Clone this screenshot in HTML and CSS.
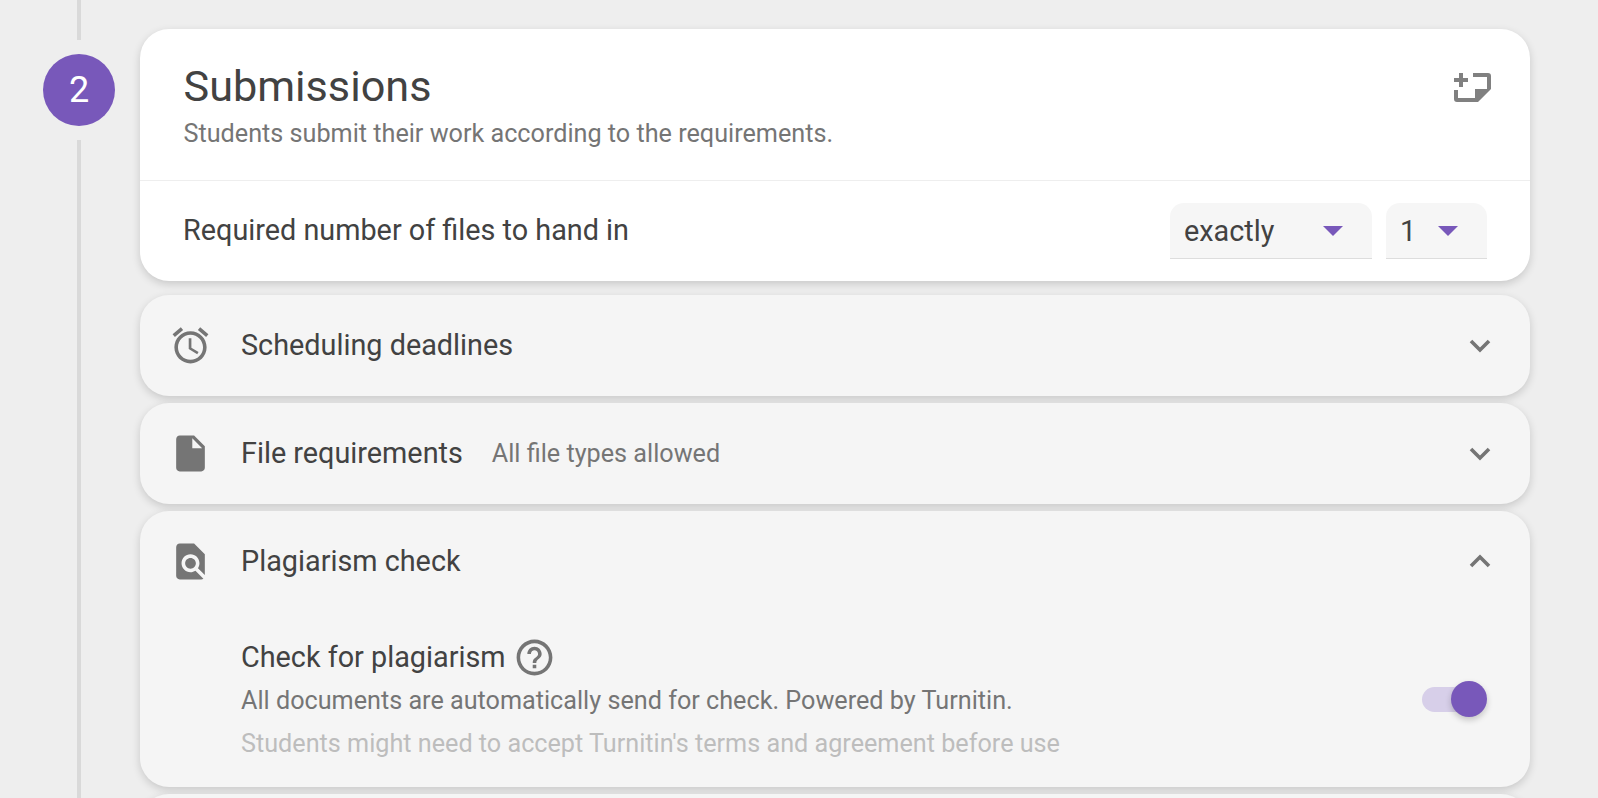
FILE: index.html
```html
<!DOCTYPE html>
<html lang="en">
<head>
<meta charset="utf-8">
<title>Submissions</title>
<link rel="stylesheet" href="styles.css">
</head>
<body>
<div class="page">
  <div class="rail">
    <div class="rail-line rail-top"></div>
    <div class="step">2</div>
    <div class="rail-line rail-bottom"></div>
  </div>
  <div class="cards">
    <section class="card card-main">
      <header class="main-head">
        <div>
          <h1 class="title">Submissions</h1>
          <p class="subtitle">Students submit their work according to the requirements.</p>
        </div>
        <svg class="note-icon" viewBox="0 0 38 30" aria-hidden="true">
          <path class="note-fill" d="M5 1h4v5h5v4H9v5H5v-5H0V6h5zM19 1h15a3 3 0 0 1 3 3v13l-13 13H3a3 3 0 0 1-3-3V18h4v8h17V17h12V5H19z"/>
        </svg>
      </header>
      <div class="main-row">
        <span class="label">Required number of files to hand in</span>
        <div class="selects">
          <div class="select select-wide"><span>exactly</span><i class="caret"></i></div>
          <div class="select select-narrow"><span>1</span><i class="caret"></i></div>
        </div>
      </div>
    </section>

    <section class="card row-card card-first">
      <div class="row-head">
        <svg class="icon" viewBox="0 0 24 24" aria-hidden="true"><path d="M22 5.72l-4.6-3.86-1.29 1.53 4.6 3.86L22 5.72zM7.88 3.39L6.6 1.86 2 5.71l1.29 1.53 4.59-3.85zM12.5 8H11v6l4.75 2.85.75-1.23-4-2.37V8zM12 4c-4.97 0-9 4.03-9 9s4.02 9 9 9c4.97 0 9-4.03 9-9s-4.03-9-9-9zm0 16c-3.87 0-7-3.13-7-7s3.13-7 7-7 7 3.13 7 7-3.13 7-7 7z"/></svg>
        <span class="label">Scheduling deadlines</span>
        <svg class="chevron" viewBox="0 0 22 14" aria-hidden="true"><path d="M2 2l9 9 9-9"/></svg>
      </div>
    </section>

    <section class="card row-card">
      <div class="row-head">
        <svg class="icon" viewBox="0 0 24 24" aria-hidden="true"><path d="M6 2c-1.1 0-1.99.9-1.99 2L4 20c0 1.1.89 2 1.99 2H18c1.1 0 2-.9 2-2V8l-6-6H6zm7 7V3.5L18.5 9H13z"/></svg>
        <span class="label">File requirements</span>
        <span class="hint">All file types allowed</span>
        <svg class="chevron" viewBox="0 0 22 14" aria-hidden="true"><path d="M2 2l9 9 9-9"/></svg>
      </div>
    </section>

    <section class="card row-card">
      <div class="row-head">
        <svg class="icon" viewBox="0 0 24 24" aria-hidden="true"><path d="M20 19.59V8l-6-6H6c-1.1 0-1.99.9-1.99 2L4 20c0 1.1.89 2 1.99 2H18c.45 0 .85-.15 1.19-.4l-4.43-4.43c-.8.52-1.74.83-2.76.83-2.76 0-5-2.24-5-5s2.24-5 5-5 5 2.24 5 5c0 1.02-.31 1.96-.83 2.75L20 19.59zM9 13c0 1.66 1.34 3 3 3s3-1.34 3-3-1.34-3-3-3-3 1.34-3 3z"/></svg>
        <span class="label">Plagiarism check</span>
        <svg class="chevron chevron-up" viewBox="0 0 22 14" aria-hidden="true"><path d="M2 12l9-9 9 9"/></svg>
      </div>
      <div class="row-body">
        <div class="body-text">
          <div class="check-title">
            <span class="label">Check for plagiarism</span>
            <svg class="icon help" viewBox="0 0 24 24" aria-hidden="true"><path d="M11 18h2v-2h-2v2zm1-16C6.48 2 2 6.48 2 12s4.48 10 10 10 10-4.48 10-10S17.52 2 12 2zm0 18c-4.41 0-8-3.59-8-8s3.59-8 8-8 8 3.59 8 8-3.59 8-8 8zm0-14c-2.21 0-4 1.79-4 4h2c0-1.1.9-2 2-2s2 .9 2 2c0 2-3 1.75-3 5h2c0-2.25 3-2.5 3-5 0-2.21-1.79-4-4-4z"/></svg>
          </div>
          <p class="desc">All documents are automatically send for check. Powered by Turnitin.</p>
          <p class="note">Students might need to accept Turnitin's terms and agreement before use</p>
        </div>
        <div class="toggle"><span class="toggle-track"></span><span class="toggle-knob"></span></div>
      </div>
    </section>

    <section class="card row-card card-next"></section>
  </div>
</div>
</body>
</html>
```
FILE: styles.css
```css
* { box-sizing: border-box; }
html, body { margin: 0; height: 100%; overflow: hidden; }
body {
  background: #eeeeee;
  color: #424242;
  font-family: Roboto, "Liberation Sans", sans-serif;
}
.page { display: flex; height: 798px; overflow: hidden; }

.rail {
  display: flex;
  flex-direction: column;
  align-items: center;
  width: 72px;
  margin-left: 43px;
  margin-right: 25px;
  flex: none;
}
.rail-line { width: 4px; background: #d9d9d9; }
.rail-top { height: 40px; }
.rail-bottom { flex: 1; }
.step {
  width: 72px;
  height: 72px;
  margin: 14px 0;
  flex: none;
  border-radius: 50%;
  background: #7858ba;
  color: #fff;
  font-size: 36px;
  display: flex;
  align-items: center;
  justify-content: center;
}

.cards {
  width: 1390px;
  padding-top: 29px;
  display: flex;
  flex-direction: column;
  flex: none;
}
.card {
  border-radius: 29px;
  box-shadow: 0 3px 8px rgba(0, 0, 0, 0.16);
  flex: none;
}
.card-main { background: #fff; height: 252px; }
.row-card { background: #f5f5f5; margin-top: 7px; }
.card-first { margin-top: 14px; }
.card-next { height: 100px; }

.main-head {
  height: 152px;
  padding: 30px 38px 0 43.5px;
  display: flex;
  justify-content: space-between;
  align-items: flex-start;
  border-bottom: 1px solid #eeeeee;
}
.title { margin: 0; font-size: 43.2px; font-weight: 400; line-height: 56px; }
.subtitle { margin: 3px 0 0; font-size: 25.2px; line-height: 32px; color: #757575; }
.note-icon { width: 38px; height: 30px; margin-top: 13px; }
.note-fill { fill: #808080; }

.main-row {
  height: 99px;
  padding: 0 43px;
  display: flex;
  align-items: center;
  justify-content: space-between;
}
.main-row .label { margin-bottom: 2px; }
.label { font-size: 28.8px; line-height: 36px; }
.selects { display: flex; gap: 14px; margin-top: 1px; }
.select {
  height: 56px;
  padding-left: 14px;
  display: flex;
  align-items: center;
  background: #f6f6f6;
  border-bottom: 1px solid #dddddd;
  border-radius: 14px 14px 0 0;
  font-size: 28.8px;
}
.select-wide { width: 202px; }
.select-narrow { width: 101px; }
.caret {
  margin-left: auto;
  margin-right: 29px;
  width: 0;
  height: 0;
  border-left: 10px solid transparent;
  border-right: 10px solid transparent;
  border-top: 10px solid #7858ba;
}

.row-head {
  height: 101px;
  padding: 0 29px;
  display: flex;
  align-items: center;
}
.icon { width: 43px; height: 43px; fill: #757575; flex: none; }
.row-head .label { margin-left: 29px; margin-bottom: 2px; }
.hint { margin-left: 29px; font-size: 25.2px; color: #757575; }
.chevron {
  width: 22px;
  height: 14px;
  margin-left: auto;
  margin-right: 10px;
  fill: none;
  stroke: #757575;
  stroke-width: 3.6;
}
.chevron-up { margin-bottom: 2px; }

.row-body {
  padding: 0 43px 0 101px;
  display: flex;
  align-items: center;
  justify-content: space-between;
  height: 175px;
}
.body-text { margin-top: -2px; }
.check-title { display: flex; align-items: center; gap: 7px; height: 43px; }
.desc { margin: 4px 0 0; font-size: 25.2px; line-height: 36px; color: #757575; }
.note { margin: 7px 0 0; font-size: 25.2px; line-height: 36px; color: #bdbdbd; }
.toggle { position: relative; width: 65px; height: 36px; margin-top: -2px; }
.toggle-track {
  display: block;
  width: 56px;
  height: 25px;
  margin-top: 6px;
  border-radius: 13px;
  background: #d7cfe9;
}
.toggle-knob {
  position: absolute;
  right: 0;
  top: 0;
  width: 36px;
  height: 36px;
  border-radius: 50%;
  background: #7858ba;
  box-shadow: 0 3px 6px rgba(0, 0, 0, 0.2);
}
```
